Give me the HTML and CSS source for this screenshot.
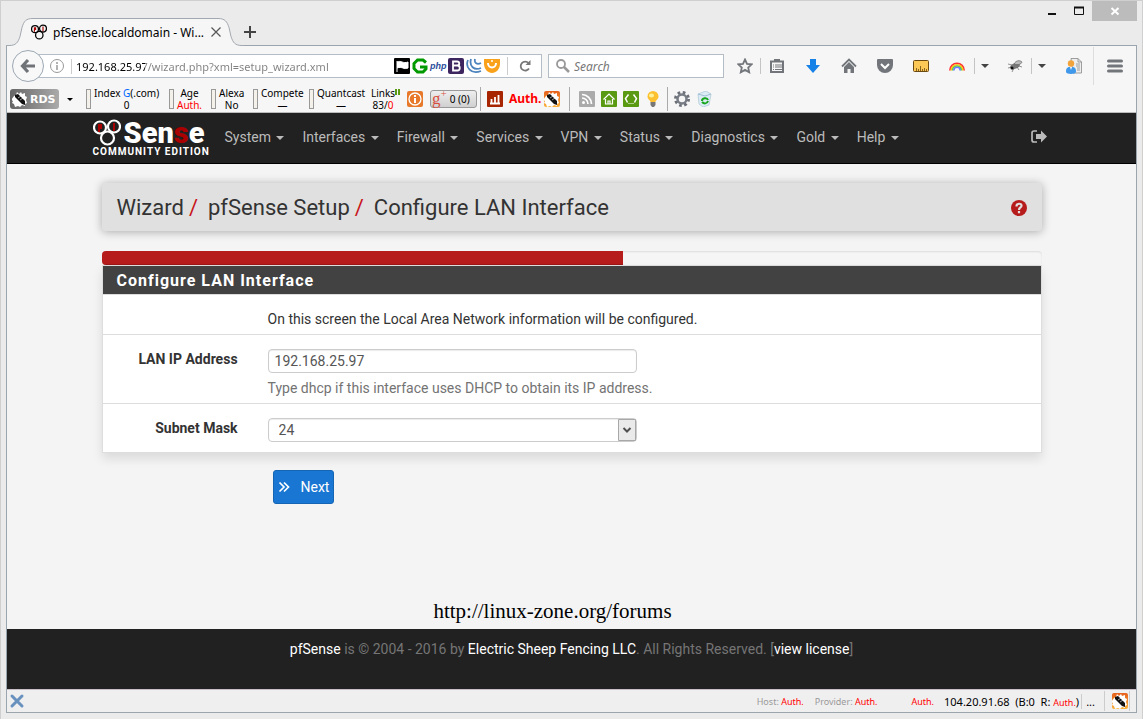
FILE: index.html
```html
<!DOCTYPE html>
<html lang="en">
<head>
    <meta charset="utf-8">
    <title>pfSense.localdomain - Wizard</title>
    <link rel="stylesheet" href="styles.css">
</head>
<body>

<svg class="defs" aria-hidden="true">
    <symbol id="rds" viewBox="0 0 16 16">
        <path d="M2 5l2-1 1-3 2 2 2-2 1 2 3-1v3l2 1-1 3 1 3-2 1 0 2-3-1-2 2-2-1-3 1-1-3-2-1 1-2-2-1z" fill="#fff"/>
        <path d="M3 4l3-1 7 7v4l-3-1-7-7z" fill="#111"/>
        <path d="M6 7l3-2M8 9l3-2" stroke="#fff" stroke-width=".6"/>
    </symbol>
    <symbol id="rings" viewBox="0 0 28 27">
        <circle cx="7" cy="8.500" r="6" fill="none" stroke="currentColor" stroke-width="2.200"/>
        <circle cx="21" cy="7.500" r="6" fill="none" stroke="currentColor" stroke-width="2.200"/>
        <circle cx="14.500" cy="19" r="6.500" fill="none" stroke="currentColor" stroke-width="2.200"/>
        <path d="M5 5h4v5H7v3H5zM20 4h2v8h-2z" fill="#a00"/>
    </symbol>
</svg>

<div class="window">
    <div class="titlebar">
        <div class="tab">
            <svg class="tab-shape" viewBox="0 0 238 28"><path d="M0 28v-.5h3c7 0 9-3 11-9l2-9C18 3 20 .5 27 .5h185c7 0 9 3 11 9l2 9c2 6 4 9 11 9h2v.5z" fill="#f6f6f6"/><path d="M0 27.500h3c7 0 9-3 11-9l2-9C18 3 20 .5 27 .5h185c7 0 9 3 11 9l2 9c2 6 4 9 11 9h2" fill="none" stroke="#a3a9b0"/></svg>
            <svg class="icon16 favicon"><use href="#rings"/></svg>
            <span class="tab-title">pfSense.localdomain - Wi...</span>
            <button class="plain" aria-label="Close tab"><svg class="icon12" viewBox="0 0 12 12"><path d="M1.500 1.500l9 9M10.500 1.500l-9 9" stroke="#555" stroke-width="1.200"/></svg></button>
        </div>
        <button class="plain new-tab" aria-label="New tab"><svg class="icon12" viewBox="0 0 12 12"><path d="M6 0v12M0 6h12" stroke="#444" stroke-width="2"/></svg></button>
        <div class="window-buttons">
            <button class="plain" aria-label="Minimize"><svg class="icon12" viewBox="0 0 12 12"><path d="M2 9h8" stroke="#111" stroke-width="2"/></svg></button>
            <button class="plain" aria-label="Maximize"><svg class="icon12" viewBox="0 0 12 12"><path d="M1.500 2.500h9v7h-9z" fill="none" stroke="#111"/><path d="M1 2.500h10" stroke="#111" stroke-width="2"/></svg></button>
            <button class="plain close" aria-label="Close window"><svg class="icon12" viewBox="0 0 12 12"><path d="M2.500 3l7 6.500M9.500 3l-7 6.500" stroke="#fff" stroke-width="2"/></svg></button>
        </div>
    </div>

    <div class="frame">
        <div class="toolbar">
            <button class="plain back" aria-label="Back"><svg class="icon16" viewBox="0 0 16 16"><path d="M8 2L2.500 8 8 14M3 8h12" fill="none" stroke="#6f7378" stroke-width="3.200"/></svg></button>
            <div class="urlbar">
                <svg class="icon16" viewBox="0 0 16 16"><circle cx="8" cy="8" r="6.500" fill="none" stroke="#999"/><path d="M8 7v5M8 4v2" stroke="#999" stroke-width="1.500"/></svg>
                <input class="url" type="text" aria-label="Address" value="192.168.25.97/wizard.php?xml=setup_wizard.xml">
                <div class="page-icons">
                    <svg class="icon16" viewBox="0 0 16 16"><rect width="16" height="16" rx="1"/><path d="M3 14V3M3 4c4-2 6 2 11 0v6c-4 2-6-2-11 0" fill="#fff" stroke="#fff"/></svg>
                    <svg class="icon16" viewBox="0 0 16 16"><path d="M14 4.500L11 2H5.500L2 5.500v5L5.500 14H11l3-3V9H8" fill="none" stroke="#009a00" stroke-width="3"/></svg>
                    <span class="php">php</span>
                    <svg class="icon16" viewBox="0 0 16 16"><rect width="16" height="16" rx="2" fill="#3d2560"/><path d="M5 3.500h4c3 0 3 4 0 4H5zM5 7.500h4.500c3 0 3 5 0 5H5z" fill="none" stroke="#fff" stroke-width="1.800"/></svg>
                    <svg class="icon16" viewBox="0 0 16 16"><path d="M2 2C-1 9 5 17 15 13M5 1c-2 7 3 12 10 9M9 1c-1 4 2 6 6 4" fill="none" stroke="#4c83bd" stroke-width="1.800"/></svg>
                    <svg class="icon16" viewBox="0 0 16 16"><path d="M0 1h16v5c0 5-4 9-8 9s-8-4-8-9z" fill="#f9a11b"/><path d="M4 5c0 6 8 6 8 0" fill="none" stroke="#fff" stroke-width="2"/><circle cx="8" cy="3" r="1" fill="#fff"/></svg>
                </div>
                <button class="plain reload" aria-label="Reload"><svg class="icon12" viewBox="0 0 12 12"><path d="M10 8.500A4.500 4.500 0 1 1 9.500 3" fill="none" stroke="#777" stroke-width="1.800"/><path d="M11.500 0v5h-5z" fill="#777"/></svg></button>
            </div>
            <div class="searchbar">
                <svg class="icon16" viewBox="0 0 16 16"><circle cx="6" cy="6" r="4" fill="none" stroke="#999" stroke-width="1.800"/><path d="M9 9l5 5" stroke="#999" stroke-width="2.500"/></svg>
                <input type="text" aria-label="Search" placeholder="Search">
            </div>
            <div class="tools">
                <button class="plain narrow split" aria-label="Bookmark"><svg class="icon16" viewBox="0 0 16 16"><path d="M8 1.500l2 4.300 4.700.5-3.500 3.200 1 4.800L8 11.900l-4.200 2.400 1-4.800L1.300 6.300l4.700-.5z" fill="none" stroke="#72767b" stroke-width="1.800"/></svg></button>
                <button class="plain narrow" aria-label="Bookmarks list"><svg class="icon16" viewBox="0 0 16 16"><path d="M2 3.500h12v10.500H2z" fill="none" stroke="#72767b" stroke-width="2"/><path d="M5 1h6v3H5z" fill="#72767b"/><path d="M4 7h1M6 7h7M4 9h1M6 9h7M4 11.500h1M6 11.500h7" stroke="#72767b" stroke-width="1.200"/></svg></button>
                <button class="plain downloads" aria-label="Downloads"><svg class="icon16" viewBox="0 0 16 16"><path d="M5 1h6v6h4l-7 8-7-8h4z" fill="#1681e6"/></svg></button>
                <button class="plain" aria-label="Home"><svg class="icon16" viewBox="0 0 16 16"><path d="M1 8.500l7-7 7 7" fill="none" stroke="#72767b" stroke-width="1.800"/><path d="M8 4l5 5v6H9.500v-4h-3v4H3V9z" fill="#72767b"/></svg></button>
                <button class="plain" aria-label="Pocket"><svg class="icon16" viewBox="0 0 16 16"><path d="M0 2q0-1 1-1h14q1 0 1 1v5a8 8 0 0 1-16 0z" fill="#72767b"/><path d="M4 6l4 4 4-4" fill="none" stroke="#fff" stroke-width="2"/></svg></button>
                <button class="plain" aria-label="Ruler"><svg class="icon16" viewBox="0 0 16 16"><rect x=".5" y="2.500" width="15" height="11" rx="1" fill="#fdc956" stroke="#6b4a12"/><path d="M3.500 13v-3M5.500 13v-2M7.500 13v-5M9.500 13v-2M11.500 13v-3M13.500 13v-2" stroke="#6b4a12" stroke-width=".8"/></svg></button>
                <button class="plain split" aria-label="Colors"><svg class="icon16" viewBox="0 0 16 16" fill="none" stroke-width="1.600"><path d="M.8 12.500a7.200 7.200 0 0 1 14.400 0" stroke="#f33"/><path d="M2.200 12.500a5.800 5.800 0 0 1 11.600 0" stroke="#ffc21e"/><path d="M3.500 12.500a4.500 4.500 0 0 1 9 0" stroke="#5dd83b"/><path d="M4.800 12.500a3.200 3.200 0 0 1 6.400 0" stroke="#6a7cff"/></svg></button>
                <button class="plain caret-btn" aria-label="Color options"><span class="caret"></span></button>
                <button class="plain debug split" aria-label="Debug"><svg class="icon16" viewBox="0 0 16 16"><ellipse cx="8" cy="8" rx="5" ry="2.800" transform="rotate(-22 8 8)" fill="#777"/><path d="M7 6c2-4 6-4 8-2-1 3-5 3-8 2z" fill="#bbb" stroke="#555" stroke-width=".6"/><path d="M5 7L1 6M5 9l-4 1M7 10l-2 4M10 9l2 3M12 8l3 1" stroke="#666" stroke-width=".7"/><circle cx="5" cy="10" r="1.500" fill="#111"/></svg></button>
                <button class="plain caret-btn" aria-label="Debug options"><span class="caret"></span></button>
                <button class="plain" aria-label="Profile"><svg class="icon16" viewBox="0 0 16 16"><path d="M5 .5h7L15.500 4v11H7z" fill="#eee" stroke="#888" stroke-width=".8"/><path d="M12 .5V4h3.500M10 6h4M10 8h4M11 10h3M11 12h3" fill="none" stroke="#888" stroke-width=".8"/><path d="M0 14c0-5 2-5 5-5s5 0 5 5c0 2.500-10 2.500-10 0z" fill="#3f98ea"/><path d="M4 9h2l-1 3z" fill="#fff"/><circle cx="5" cy="5.500" r="3.200" fill="#f2a33c"/></svg></button>
                <button class="plain menu" aria-label="Menu"><svg class="icon16" viewBox="0 0 16 16"><path d="M1.500 3h13M1.500 8h13M1.500 13h13" stroke="#72767b" stroke-width="3" stroke-linecap="round"/></svg></button>
            </div>
        </div>

        <div class="seobar">
            <button class="rds"><svg class="icon16"><use href="#rds"/></svg>RDS</button>
            <span class="caret small"></span>
            <div class="metric wide"><i></i><p>Index <b class="blue">G</b>(.com)<br>0</p></div>
            <div class="metric"><i></i><p>Age<br><b class="red">Auth.</b></p></div>
            <div class="metric"><i></i><p>Alexa<br>No</p></div>
            <div class="metric mid"><i></i><p>Compete<br>—</p></div>
            <div class="metric mid"><i></i><p>Quantcast<br>—</p></div>
            <div class="links"><p>Links<br>83/<b class="red">0</b></p><span class="pause"></span></div>
            <svg class="icon16" viewBox="0 0 16 16"><rect width="16" height="16" rx="2" fill="#e8792a"/><circle cx="8" cy="8" r="6" fill="none" stroke="#fff" stroke-width="1.300"/><path d="M8 7v5M8 4v2" stroke="#fff" stroke-width="2"/></svg>
            <button class="gplus"><b>g<sup>+</sup></b>0 (0)</button>
            <div class="group">
                <svg class="icon16" viewBox="0 0 16 16"><rect width="16" height="16" rx="1" fill="#a72500"/><path d="M4.500 12V8M8 12V6M11.500 12V4M3 12.500h10" stroke="#fff" stroke-width="1.800"/></svg>
                <b class="auth">Auth.</b>
                <svg class="icon16 orange"><use href="#rds"/></svg>
            </div>
            <div class="group spaced">
                <svg class="icon16" viewBox="0 0 16 16"><rect width="16" height="16" rx="1" fill="#aaa"/><circle cx="4.500" cy="11.500" r="1.500" fill="#fff"/><path d="M3 7a6 6 0 0 1 6 6M3 3.500a9.500 9.500 0 0 1 9.500 9.500" fill="none" stroke="#fff" stroke-width="1.700"/></svg>
                <svg class="icon16" viewBox="0 0 16 16"><rect width="16" height="16" rx="1" fill="#5a9a12"/><path d="M2.500 8.500L8 3l5.500 5.500M4.500 8v5h7V8M7 13v-3h2v3" fill="none" stroke="#fff" stroke-width="1.200"/></svg>
                <svg class="icon16" viewBox="0 0 16 16"><rect width="16" height="16" rx="1" fill="#5a9a12"/><path d="M5.500 3.500L2.500 7.500l2 4M10.500 3.500l3 4-2 4" fill="none" stroke="#fff" stroke-width="1.500"/><path d="M5.500 12.500h5" stroke="#fff" stroke-dasharray="1 1"/></svg>
                <svg class="icon16" viewBox="0 0 16 16"><path d="M5.500 11C5.500 9 2.500 8.500 2.500 5.500a5.500 5.500 0 0 1 11 0c0 3-3 3.500-3 5.500z" fill="#fdc02e"/><ellipse cx="6.500" cy="4.500" rx="2.500" ry="2" fill="#fff09a"/><path d="M5.500 11h5v3L9 16H7l-1.500-2z" fill="#777"/></svg>
            </div>
            <div class="group">
                <svg class="icon16" viewBox="0 0 16 16"><circle cx="8" cy="8" r="6.500" fill="none" stroke="#6a6f78" stroke-width="3" stroke-dasharray="2.600 2.500"/><circle cx="8" cy="8" r="4.500" fill="none" stroke="#777c85" stroke-width="2.500"/></svg>
                <svg class="icon16" viewBox="0 0 16 16"><path d="M2 3l8-3 5 3-2 11-6 2-4-3z" fill="#dcecf5" stroke="#a9c6d6" stroke-width=".7"/><path d="M2 3l7 2 6-2" fill="none" stroke="#9fbfd3"/><path d="M6 10c0-3 5-4 6-1M12 10c-1 3-4 3-6 1" fill="none" stroke="#16a51d" stroke-width="2"/></svg>
            </div>
        </div>

        <div class="page">
            <nav class="navbar">
                <div class="container">
                    <a class="logo" href="#" aria-label="pfSense Community Edition">
                        <span class="logo-top"><svg class="logo-rings"><use href="#rings"/></svg><span>Sen<b>s</b>e</span></span>
                        <span class="logo-edition">COMMUNITY EDITION</span>
                    </a>
                    <a href="#">System <span class="caret"></span></a>
                    <a href="#">Interfaces <span class="caret"></span></a>
                    <a href="#">Firewall <span class="caret"></span></a>
                    <a href="#">Services <span class="caret"></span></a>
                    <a href="#">VPN <span class="caret"></span></a>
                    <a href="#">Status <span class="caret"></span></a>
                    <a href="#">Diagnostics <span class="caret"></span></a>
                    <a href="#">Gold <span class="caret"></span></a>
                    <a href="#">Help <span class="caret"></span></a>
                    <a class="logout" href="#" aria-label="Logout"><svg class="icon16" viewBox="0 0 16 16"><path d="M6 2H3Q1 2 1 4v7q0 2 2 2h3" fill="none" stroke="#bbb" stroke-width="1.700"/><path d="M5 5h5V1.500L16 7.500l-6 6V10H5z" fill="#bbb"/></svg></a>
                </div>
            </nav>

            <main class="content">
                <header class="page-header">
                    <h1>Wizard<i>/</i>pfSense Setup<i>/</i>Configure LAN Interface</h1>
                    <a href="#" aria-label="Help"><svg class="icon16" viewBox="0 0 16 16"><circle cx="8" cy="8" r="8" fill="#b71c1c"/><path d="M5.500 6.500c0-3.500 5-3.500 5-.8C10.500 7.500 8 7.500 8 10M8 11v2.200" fill="none" stroke="#e0e0e0" stroke-width="2.200"/></svg></a>
                </header>

                <div class="progress"><div class="bar" style="width: 55.5%"></div></div>

                <form>
                    <section class="panel">
                        <h2>Configure LAN Interface</h2>
                        <div class="row">
                            <span class="label"></span>
                            <div class="field">On this screen the Local Area Network information will be configured.</div>
                        </div>
                        <div class="row">
                            <label class="label" for="lanip">LAN IP Address</label>
                            <div class="field">
                                <input id="lanip" type="text" value="192.168.25.97">
                                <p class="help">Type dhcp if this interface uses DHCP to obtain its IP address.</p>
                            </div>
                        </div>
                        <div class="row">
                            <label class="label" for="subnet">Subnet Mask</label>
                            <div class="field select">
                                <select id="subnet"><option>24</option></select>
                                <svg class="arrow" viewBox="0 0 18 22"><path d="M.5.5h17v21H.5z" fill="#eaeaea" stroke="#a8a8a8"/><path d="M5.500 9L9 12.500 12.500 9" fill="none" stroke="#505050" stroke-width="2"/></svg>
                            </div>
                        </div>
                    </section>
                    <button class="next" type="button"><svg class="icon12" viewBox="0 0 12 12"><path d="M1.500 1.500L6 6l-4.500 4.500M6 1.500L10.500 6 6 10.500" fill="none" stroke="#fff" stroke-width="1.700"/></svg>Next</button>
                </form>
            </main>

            <p class="forum">http://linux-zone.org/forums</p>

            <footer class="footer">
                <a href="#">pfSense</a> is © 2004 - 2016 by <a href="#">Electric Sheep Fencing LLC</a>. All Rights Reserved. [<a href="#">view license</a>]
            </footer>
        </div>

        <div class="statusbar">
            <button class="plain" aria-label="Close bar"><svg class="icon16" viewBox="0 0 16 16"><path d="M3 3l10 10M13 3L3 13" stroke="#6991bd" stroke-width="3" stroke-linecap="round"/></svg></button>
            <span class="host">Host: <b class="red">Auth.</b></span>
            <span class="provider">Provider: <b class="red">Auth.</b></span>
            <b class="red rank">Auth.</b>
            <span class="ip">104.20.91.68 &nbsp;(B:0 &nbsp;R: <b class="red">Auth.</b>)</span>
            <span class="more">...</span>
            <span class="badge"><svg class="icon16 orange"><use href="#rds"/></svg></span>
        </div>
    </div>
</div>

</body>
</html>
```
FILE: styles.css
```css
* {
    box-sizing: border-box;
}

body {
    margin: 0;
    font-family: "Noto Sans", sans-serif;
    font-size: 12px;
    color: #000;
}

p, h1, h2 {
    margin: 0;
}

a {
    text-decoration: none;
}

svg {
    display: block;
    flex: none;
}

.defs {
    position: absolute;
    width: 0;
    height: 0;
}

.icon16 {
    width: 16px;
    height: 16px;
}

.icon12 {
    width: 12px;
    height: 12px;
}

.plain {
    display: flex;
    align-items: center;
    justify-content: center;
    padding: 0;
    border: 0;
    background: none;
}

.caret {
    display: inline-block;
    border: 4px solid transparent;
    border-top-color: currentColor;
    border-bottom: 0;
}

.caret.small {
    border-width: 3px;
    border-bottom: 0;
}

.red {
    color: #f00;
    font-weight: normal;
}

.blue {
    color: #0066ff;
    font-weight: normal;
}

.orange {
    background: linear-gradient(#e6601c, #f9b13a);
    border-radius: 2px;
}

/* browser window */
.window {
    display: flex;
    flex-direction: column;
    min-height: 100vh;
    padding: 0 5px 6px;
    border: 1px solid #cfcfcf;
    border-bottom-width: 0;
    background: #ebebeb;
}

.titlebar {
    display: flex;
    align-items: flex-end;
    height: 44px;
}

.tab {
    position: relative;
    display: flex;
    align-items: center;
    width: 238px;
    height: 28px;
    margin-bottom: -1px;
    padding: 0 22px 0 25px;
}

.tab-shape {
    position: absolute;
    left: 0;
    top: 0;
    width: 238px;
    height: 28px;
}

.tab > .plain, .favicon, .tab-title {
    position: relative;
}

.tab-title {
    flex: 1;
    margin-left: 6px;
    white-space: nowrap;
}

.new-tab {
    height: 26px;
}

.window-buttons {
    display: flex;
    align-self: flex-start;
    margin-left: auto;
}

.window-buttons button {
    width: 27px;
    height: 20px;
}

.window-buttons .close {
    width: 45px;
    background: #bcbcbc;
}

.frame {
    flex: 1;
    display: flex;
    flex-direction: column;
    border: 1px solid #9aa5ae;
    background: #f6f6f6;
}

.toolbar {
    display: flex;
    align-items: center;
    height: 40px;
    padding-left: 5px;
}

.back {
    position: relative;
    z-index: 1;
    width: 32px;
    height: 32px;
    border: 1px solid #9ca8b3;
    border-radius: 50%;
    background: #f8f8f8;
}

.urlbar, .searchbar {
    display: flex;
    align-items: center;
    height: 24px;
    border: 1px solid #b4bdc6;
    background: #fff;
}

.urlbar {
    flex: 1;
    margin-left: -6px;
    padding-left: 10px;
}

.urlbar input, .searchbar input {
    flex: 1;
    min-width: 0;
    padding: 0;
    border: 0;
    outline: 0;
    background: none;
    font: 12px "Noto Sans", sans-serif;
}

.urlbar .url {
    margin-left: 6px;
    padding-left: 4px;
    border-left: 1px solid #ccc;
    font-size: 11px;
    color: transparent;
    background: linear-gradient(90deg, #000 73px, #808080 73px);
    background-clip: text;
}

.page-icons {
    display: flex;
    align-items: center;
    gap: 2px;
}

.php {
    width: 16px;
    font: italic bold 9px "Liberation Sans", sans-serif;
    color: #2b4d9b;
}

.reload {
    width: 34px;
    height: 18px;
    margin-left: 7px;
    border-left: 1px solid #ccc;
}

.searchbar {
    width: 176px;
    margin-left: 6px;
    padding: 0 6px;
}

.searchbar input {
    margin-left: 3px;
}

.searchbar input::placeholder {
    color: #777;
    font-style: italic;
}

.tools {
    display: flex;
    align-items: center;
    margin-left: 6px;
}

.tools .plain {
    width: 36px;
    height: 16px;
}

.tools .narrow {
    width: 31px;
}

.tools .downloads {
    margin-left: 3px;
}

.tools .debug {
    width: 33px;
}

.tools .split {
    border-right: 1px solid #c4c4c4;
}

.tools .caret-btn {
    width: 24px;
    padding-right: 4px;
    color: #444;
}

.tools .menu {
    width: 43px;
    height: 38px;
    margin-left: 1px;
    border-left: 1px solid #ddd;
}

/* page rank toolbar */
.seobar {
    display: flex;
    align-items: center;
    height: 27px;
    padding-left: 3px;
    border-bottom: 1px solid #bbb;
    font-size: 10px;
    line-height: 12px;
}

.rds {
    display: flex;
    align-items: center;
    gap: 2px;
    width: 49px;
    height: 20px;
    padding: 0 2px;
    border: 0;
    border-radius: 3px;
    background: linear-gradient(90deg, #666, #aaa);
    color: #fff;
    font: bold 11px "DejaVu Sans", sans-serif;
}

.seobar .small {
    margin: 0 13px 0 8px;
}

.metric {
    display: flex;
    align-items: center;
    gap: 3px;
    width: 42px;
    text-align: center;
    white-space: nowrap;
}

.metric i {
    flex: none;
    width: 5px;
    height: 20px;
    border: 1px solid #999;
    background: #f4f1ea;
}

.metric.wide {
    width: 83px;
}

.metric.mid {
    width: 56px;
}

.links {
    display: flex;
    width: 36px;
    margin-left: 6px;
    text-align: center;
}

.pause {
    flex: none;
    width: 5px;
    height: 6px;
    margin-top: 2px;
    border: solid #5a9a12;
    border-width: 0 2px;
}

.gplus {
    display: flex;
    align-items: center;
    gap: 3px;
    width: 47px;
    height: 18px;
    margin: 0 3px 0 7px;
    padding: 0 1px;
    border: 1px solid #999;
    border-radius: 3px;
    background: linear-gradient(#eee, #d0d0d0);
    font: 10px "Noto Sans", sans-serif;
    white-space: nowrap;
}

.gplus b {
    color: #d9503f;
    font: 17px/12px "Liberation Serif", serif;
}

.gplus sup {
    font-size: 11px;
    line-height: 0;
}

.group {
    display: flex;
    align-items: center;
    gap: 6px;
    height: 24px;
    padding: 0 9px 0 6px;
    border-left: 1px solid #aaa;
}

.group .auth {
    margin-right: -3px;
    font-size: 12px;
    color: #f00;
}

.group.spaced {
    padding: 0 6px 0 9px;
}

/* pfSense page */
.page {
    flex: 1;
    display: flex;
    flex-direction: column;
    background: #f4f4f4;
    font: 14px/20px Roboto, sans-serif;
    color: #333;
}

.navbar {
    border-bottom: 1px solid #000;
    background: #212121;
}

.container {
    display: flex;
    align-items: center;
    width: 100%;
    max-width: 970px;
    height: 50px;
    margin: 0 auto;
    padding: 0 1px 2px 6px;
}

.navbar a {
    padding: 0 9px;
    color: #bbb;
    white-space: nowrap;
}

.navbar .caret {
    margin-left: 2px;
    vertical-align: middle;
}

.navbar .logo {
    display: flex;
    flex-direction: column;
    width: 123px;
    padding-left: 0;
    padding-top: 3px;
    color: #fff;
}

.logo-top {
    display: flex;
    align-items: center;
    height: 26px;
    font: 900 29px/26px Roboto, sans-serif;
}

.logo-rings {
    width: 28px;
    height: 27px;
    margin-right: 3px;
}

.logo-top b {
    color: #a00;
    font-weight: 900;
}

.logo-edition {
    font: bold 10px/12px Roboto, sans-serif;
    letter-spacing: 1px;
}

.navbar .logout {
    margin-left: auto;
}

.content {
    width: 100%;
    max-width: 970px;
    margin: 0 auto;
    padding: 19px 15px 0;
}

.page-header {
    display: flex;
    align-items: center;
    justify-content: space-between;
    height: 48px;
    margin-bottom: 20px;
    padding: 2px 15px 0;
    border-radius: 4px;
    background: #e0e0e0;
    box-shadow: 0 1px 10px rgba(0, 0, 0, 0.3);
}

.page-header h1 {
    font-size: 22px;
    font-weight: normal;
    line-height: 24px;
}

.page-header i {
    margin: 0 10px 0 5px;
    color: #c9151b;
    font-style: normal;
}

.progress {
    height: 14px;
    overflow: hidden;
    border-radius: 4px;
    background: #f5f5f5;
    box-shadow: inset 0 1px 2px rgba(0, 0, 0, 0.1);
}

.bar {
    height: 100%;
    background: #b71c1c;
    box-shadow: inset 0 -1px 0 rgba(0, 0, 0, 0.15);
}

.panel {
    border: 1px solid #ddd;
    background: #fff;
    box-shadow: 0 6px 10px rgba(0, 0, 0, 0.1);
}

.panel h2 {
    padding: 5px 14px 3px;
    background: #424242;
    color: #fff;
    font-size: 16px;
    font-weight: bold;
    letter-spacing: 1px;
    line-height: 20px;
}

.row {
    display: flex;
    padding: 14px 0 5px;
    border-top: 1px solid #ddd;
}

.label {
    width: 16%;
    padding-right: 15px;
    font-weight: bold;
    text-align: right;
}

.field {
    position: relative;
    width: 84%;
    padding: 0 15px;
}

.field input, .field select {
    display: block;
    width: 100%;
    max-width: 369px;
    height: 24px;
    padding: 0 6px;
    border: 1px solid #ccc;
    border-radius: 4px;
    background: #fff;
    box-shadow: inset 0 1px 1px rgba(0, 0, 0, 0.08);
    color: #555;
    font: 14px Roboto, sans-serif;
}

.field select {
    appearance: none;
    padding: 0 10px;
}

.select {
    max-width: 399px;
    padding-bottom: 5px;
}

.arrow {
    position: absolute;
    right: 16px;
    top: 1px;
    width: 18px;
    height: 22px;
    pointer-events: none;
}

.help {
    margin-top: 5px;
    color: #737373;
}

.next {
    display: flex;
    align-items: center;
    gap: 11px;
    height: 34px;
    margin: 17px 0 0 171px;
    padding: 0 4px;
    border: 1px solid #1565b5;
    border-radius: 3px;
    background: #1976d2;
    color: #fff;
    font: 14px Roboto, sans-serif;
}

.forum {
    margin-top: auto;
    padding: 0 38px 6px 0;
    color: #000;
    font: 21px/24px "Liberation Serif", serif;
    text-align: center;
}

.footer {
    height: 60px;
    padding-top: 10px;
    background: #212121;
    color: #757575;
    text-align: center;
}

.footer a {
    color: #fff;
}

/* bottom bar */
.statusbar {
    display: flex;
    align-items: center;
    height: 23px;
    padding: 0 6px 0 2px;
    border-top: 1px solid #c8bfc8;
    background: #f0eff0;
    font-size: 9px;
    white-space: nowrap;
}

.host {
    margin-left: auto;
    color: #999;
}

.provider {
    margin-left: 11px;
    color: #999;
}

.rank {
    margin: 0 10px 0 34px;
}

.ip {
    font-size: 11px;
}

.ip .red {
    font-size: 9px;
}

.more {
    margin-left: 2px;
    padding: 0 9px 0 4px;
    border-left: 1px solid #ccc;
    font-size: 11px;
}

.badge {
    padding: 2px 1px 2px 7px;
    border: solid #ccc;
    border-width: 0 1px;
}
```
